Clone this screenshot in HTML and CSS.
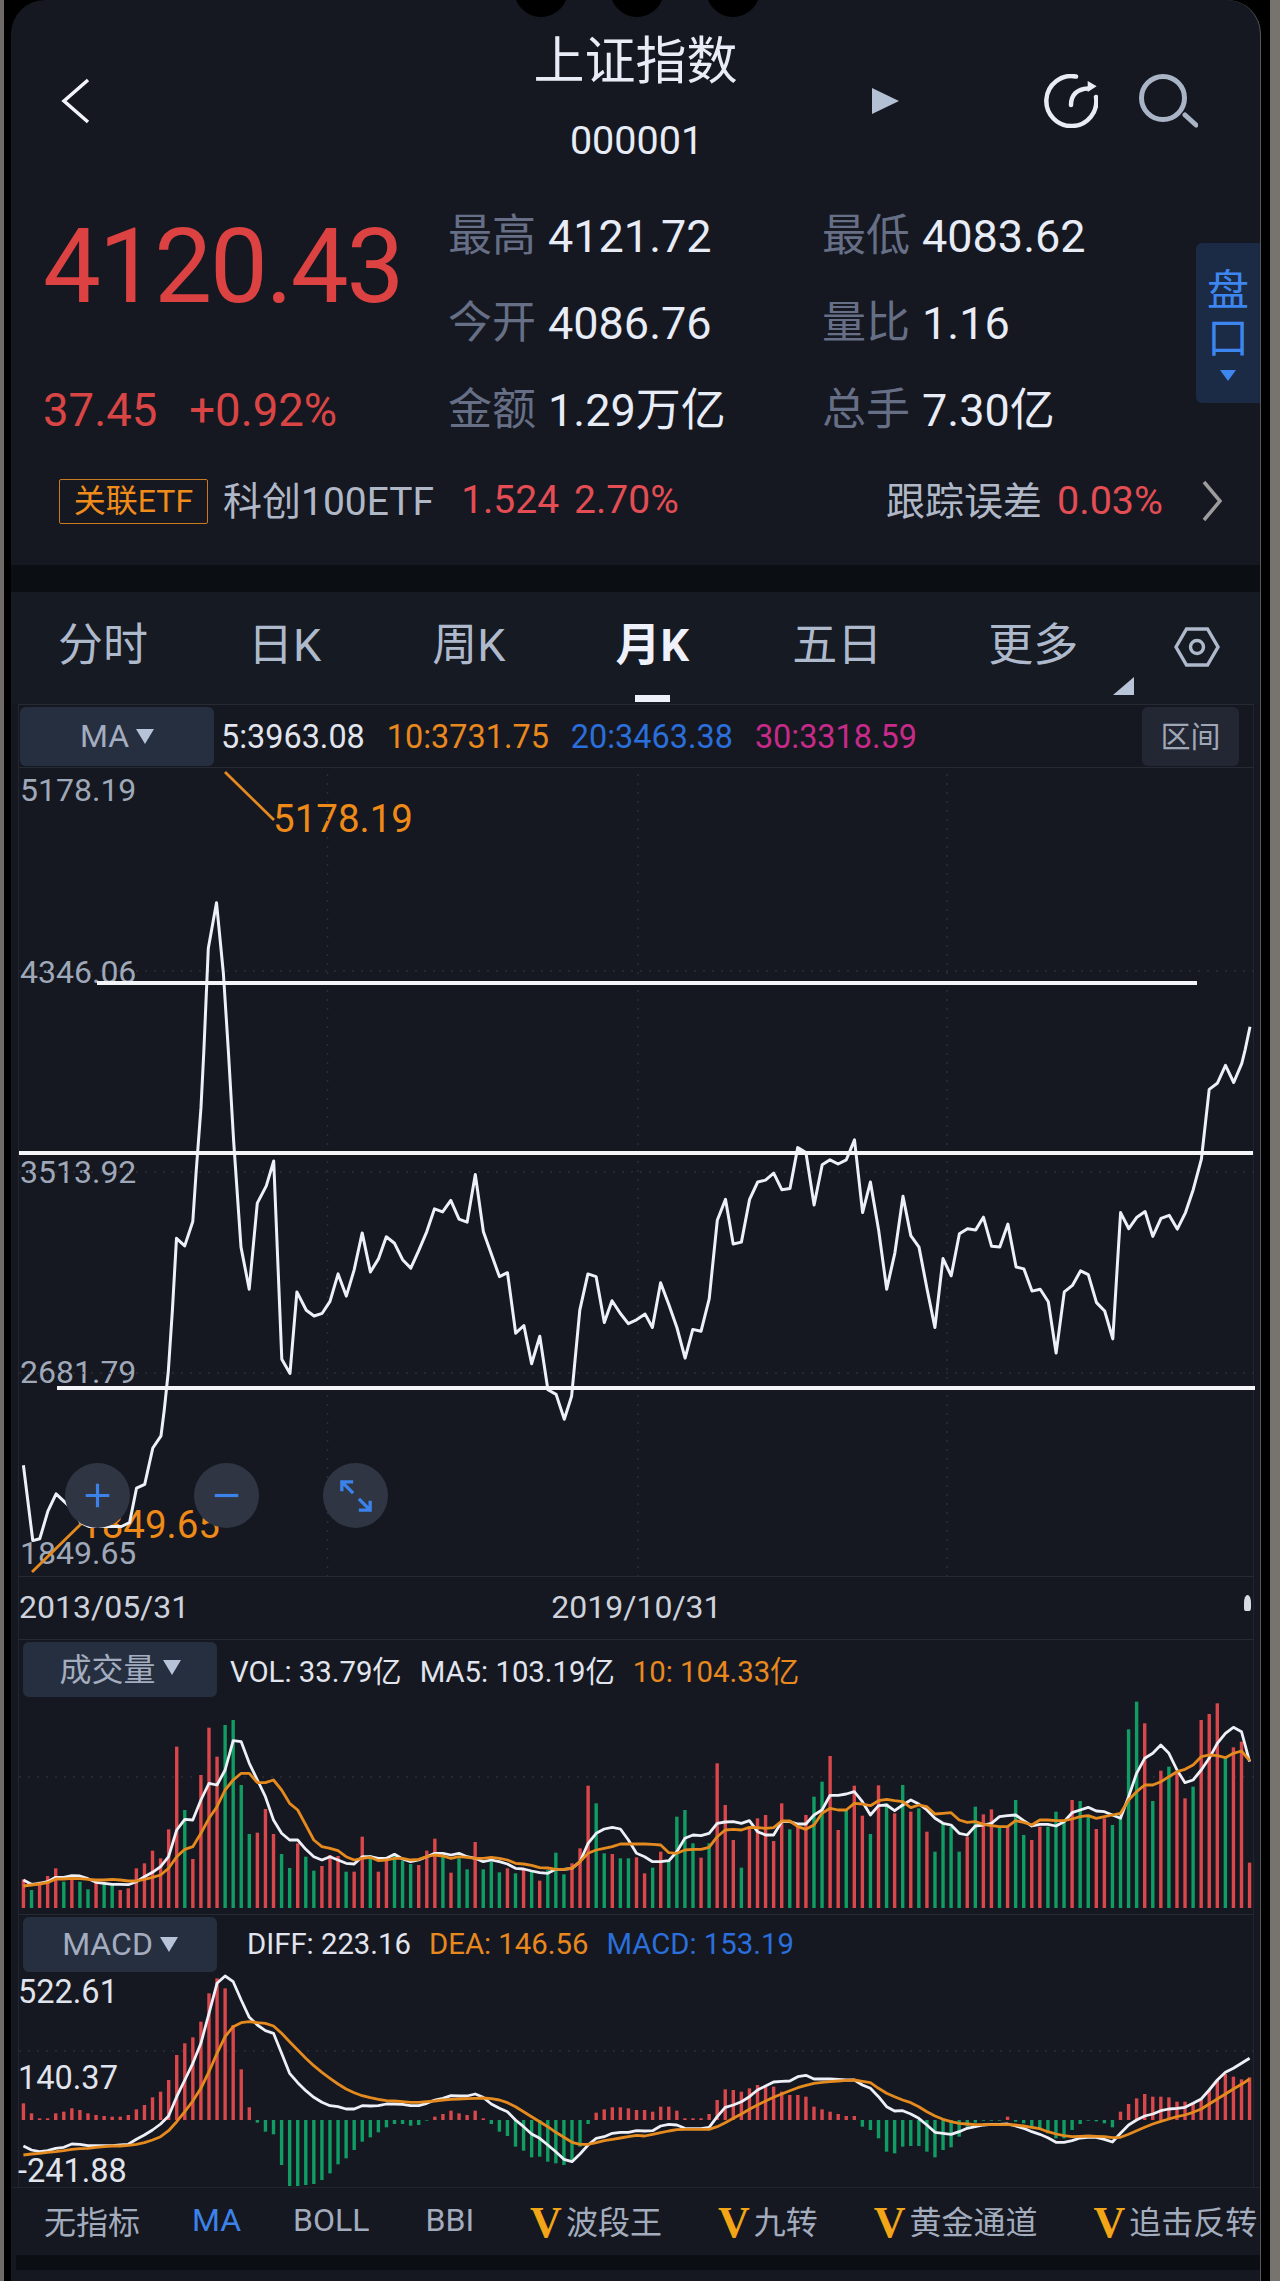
FILE: index.html
```html
<!DOCTYPE html>
<html lang="zh-CN">
<head>
    <meta charset="UTF-8">
    <meta name="viewport" content="width=device-width, initial-scale=1.0">
    <title>上证指数</title>
    <link rel="stylesheet" href="styles.css">
</head>
<body>
<div class="phone">
    <div class="screen">
        <!-- Camera cut-outs along the top edge -->
        <div class="cams"><span></span><span></span><span></span></div>

        <header class="top">
            <svg class="back" viewBox="0 0 30 48"><polyline points="27,3 3,24 27,45"/></svg>
            <div class="title-box">
                <h1>上证指数</h1>
                <div class="code">000001</div>
            </div>
            <div class="tools">
                <span class="play"></span>
                <svg class="refresh" viewBox="0 0 54 54">
                    <path d="M32 2.5 A25 25 0 1 0 52 23"/>
                    <path d="M27 31 C27 21 33 15 44 14.5"/>
                    <polygon points="43.7,7 52.7,12.3 43.7,18"/>
                </svg>
                <svg class="search" viewBox="0 0 60 56">
                    <circle cx="25" cy="25" r="21.5"/>
                    <path d="M47 42 L58 52"/>
                </svg>
            </div>
        </header>

        <section class="quote">
            <div class="price">4120.43</div>
            <div class="change"><span>37.45</span><span>+0.92%</span></div>
            <div class="stat"><span class="label">最高</span><span>4121.72</span></div>
            <div class="stat"><span class="label">最低</span><span>4083.62</span></div>
            <div class="stat"><span class="label">今开</span><span>4086.76</span></div>
            <div class="stat"><span class="label">量比</span><span>1.16</span></div>
            <div class="stat"><span class="label">金额</span><span>1.29万亿</span></div>
            <div class="stat"><span class="label">总手</span><span>7.30亿</span></div>
        </section>

        <div class="pankou">
            <span>盘</span><span>口</span>
            <i class="pankou-arrow"></i>
        </div>

        <div class="etf">
            <span class="etf-tag">关联ETF</span>
            <span class="etf-name">科创100ETF</span>
            <span class="etf-num etf-price">1.524</span>
            <span class="etf-num">2.70%</span>
            <span class="etf-track">跟踪误差</span>
            <span class="etf-num">0.03%</span>
            <svg class="etf-more" viewBox="0 0 22 42"><polyline points="3,2 19,21 3,40"/></svg>
        </div>

        <div class="band"></div>

        <nav class="tabs">
            <a>分时</a>
            <a>日K</a>
            <a>周K</a>
            <a class="active">月K</a>
            <a>五日</a>
            <a>更多</a>
            <svg class="gear" viewBox="0 0 46 40">
                <polygon points="2,20 12.5,2 33.5,2 44,20 33.5,38 12.5,38"/>
                <circle cx="23" cy="20" r="6.5"/>
            </svg>
            <span class="corner"></span>
        </nav>

        <div class="chart-box">
            <div class="bar ma-bar">
                <div class="picker">MA<i></i></div>
                <span class="ma-val white">5:3963.08</span>
                <span class="ma-val orange">10:3731.75</span>
                <span class="ma-val blue">20:3463.38</span>
                <span class="ma-val pink">30:3318.59</span>
                <div class="range">区间</div>
            </div>

            <div class="main-chart">
                <span class="axis a1">5178.19</span>
                <span class="axis a2">4346.06</span>
                <span class="axis a3">3513.92</span>
                <span class="axis a4">2681.79</span>
                <span class="axis a5">1849.65</span>
                <span class="callout c-high">5178.19</span>
                <span class="callout c-low">1849.65</span>
                <svg id="main-svg" class="plot" width="1236" height="808"></svg>
                <div class="zoom-btns">
                    <button class="round"><svg viewBox="0 0 32 32"><path d="M16 3 V29 M3 16 H29"/></svg></button>
                    <button class="round"><svg viewBox="0 0 32 32"><path d="M3 16 H29"/></svg></button>
                    <button class="round round-wide"><svg viewBox="0 0 36 36"><path d="M3 3 L15 15 M3 13 V3 H15 M33 33 L21 21 M33 23 V33 H21"/></svg></button>
                </div>
            </div>

            <div class="dates">
                <span>2013/05/31</span>
                <span class="date-mid">2019/10/31</span>
                <i class="blot"></i>
            </div>

            <div class="bar sub-bar vol-bar">
                <div class="picker picker-sub">成交量<i></i></div>
                <span class="sub-val first white">VOL: 33.79亿</span>
                <span class="sub-val white">MA5: 103.19亿</span>
                <span class="sub-val orange">10: 104.33亿</span>
            </div>
            <div class="sub-chart"><svg id="vol-svg" class="plot" width="1236" height="214"></svg></div>

            <div class="bar sub-bar macd-bar">
                <div class="picker picker-sub">MACD<i></i></div>
                <span class="sub-val first-macd white">DIFF: 223.16</span>
                <span class="sub-val orange">DEA: 146.56</span>
                <span class="sub-val blue">MACD: 153.19</span>
            </div>
            <div class="sub-chart">
                <svg id="macd-svg" class="plot" width="1236" height="214"></svg>
                <span class="macd-axis m1">522.61</span>
                <span class="macd-axis m2">140.37</span>
                <span class="macd-axis m3">-241.88</span>
            </div>
        </div>

        <div class="indicators">
            <span>无指标</span>
            <span class="blue-on">MA</span>
            <span class="boll">BOLL</span>
            <span>BBI</span>
            <span><b class="vip">V</b>波段王</span>
            <span><b class="vip">V</b>九转</span>
            <span><b class="vip">V</b>黄金通道</span>
            <span><b class="vip">V</b>追击反转</span>
        </div>

        <div class="band band-bottom"></div>
    </div>
</div>
<script src="chart.js"></script>
</body>
</html>
```

FILE: styles.css
```css
* {
    box-sizing: border-box;
}

body {
    margin: 0;
    background-color: #000;
    font-family: Roboto, "Noto Sans CJK SC", sans-serif;
    color: #e8ecf6;
}

.phone {
    width: 1280px;
    height: 2281px;
    overflow: hidden;
    padding: 0 9px 0 7px;
    background-color: #000;
    border-left: 4px solid #6f6a68;
    border-right: 10px solid #77736f;
}

.screen {
    position: relative;
    width: 1250px;
    height: 2281px;
    background-color: #151821;
    border-right: 1px solid #55565c;
    border-radius: 34px 34px 0 0;
}

.cams {
    position: absolute;
    top: -37px;
    left: 503px;
    display: flex;
    gap: 42px;
}

.cams span {
    width: 54px;
    height: 54px;
    border-radius: 50%;
    background-color: #000;
}

/* Top bar */
.top {
    display: grid;
    grid-template-columns: 1fr auto 1fr;
    height: 165px;
}

.back {
    width: 30px;
    height: 48px;
    margin: 77px 0 0 50px;
}

.back polyline, .etf-more polyline {
    fill: none;
    stroke: #f2f4fa;
    stroke-width: 3.5;
}

.title-box {
    text-align: center;
}

h1 {
    margin: 32px 0 0;
    font-size: 51px;
    font-weight: 400;
    line-height: 60px;
}

.code {
    margin-top: 24px;
    padding-left: 2px;
    font-size: 39.5px;
    line-height: 50px;
}

.tools {
    display: flex;
    align-items: center;
    height: 60px;
    margin-top: 71px;
}

.play {
    width: 0;
    height: 0;
    margin-left: 134px;
    border-left: 27px solid #b4c0d4;
    border-top: 13px solid transparent;
    border-bottom: 13px solid transparent;
}

.refresh {
    width: 54px;
    height: 54px;
    margin-left: 145px;
    fill: none;
    stroke: #e8ecf6;
    stroke-width: 4.5;
    stroke-linecap: round;
}

.refresh polygon {
    fill: #e8ecf6;
    stroke: none;
}

.search {
    width: 60px;
    height: 56px;
    margin-left: 40px;
    fill: none;
    stroke: #a9b4c6;
    stroke-width: 5;
    stroke-linecap: round;
}

/* Quote block */
.quote {
    display: grid;
    grid-template-columns: 438px 374px 1fr;
    grid-auto-rows: 87px;
    padding-top: 28px;
    font-size: 45px;
}

.price {
    grid-column: 1;
    grid-row: 1 / 3;
    height: 148px;
    padding-left: 32px;
    font-size: 103px;
    line-height: 148px;
    letter-spacing: -2.2px;
    color: #dc4242;
}

.change {
    grid-column: 1;
    grid-row: 3;
    display: flex;
    gap: 32px;
    padding-left: 32px;
    font-size: 45.5px;
    line-height: 87px;
    color: #d94545;
}

.stat {
    display: flex;
    gap: 12px;
    margin-left: -1px;
    line-height: 87px;
}

.label {
    font-size: 44px;
    color: #666f86;
}

.pankou {
    position: absolute;
    top: 243px;
    right: 0;
    width: 64px;
    height: 160px;
    padding-top: 24px;
    display: flex;
    flex-direction: column;
    align-items: center;
    background-color: #1b2a45;
    border-radius: 6px 0 0 6px;
    font-size: 42px;
    line-height: 48px;
    color: #3d86ef;
}

.pankou-arrow {
    width: 0;
    height: 0;
    margin-top: 7px;
    border-top: 11px solid #3d86ef;
    border-left: 8px solid transparent;
    border-right: 8px solid transparent;
}

/* ETF row */
.etf {
    display: flex;
    align-items: center;
    height: 46px;
    margin-top: 24px;
    padding: 0 37px 0 48px;
    font-size: 39px;
    color: #b0b8c8;
}

.etf-tag {
    display: flex;
    align-items: center;
    justify-content: center;
    width: 149px;
    height: 45px;
    padding-bottom: 6px;
    border: 1px solid #c87a1c;
    border-radius: 2px;
    font-size: 32px;
    color: #f08c1a;
}

.etf-name {
    margin: -6px 0 0 15px;
}

.etf-num {
    margin: -2px 0 0 15px;
    color: #e34d53;
}

.etf-price {
    margin-left: 27px;
}

.etf-track {
    margin: -6px 0 0 auto;
}

.etf-track + .etf-num {
    margin-right: 1px;
    font-size: 39.5px;
}

.etf-more {
    width: 22px;
    height: 42px;
    margin-left: 37px;
}

.etf-more polyline {
    stroke: #9c9c9c;
}

.band {
    height: 27px;
    margin-top: 41px;
    background-color: #0b0e13;
}

/* Period tabs */
.tabs {
    position: relative;
    display: flex;
    align-items: center;
    height: 112px;
    padding: 0 0 13px 47px;
    background-color: #161a22;
    font-size: 45px;
    color: #aeb9cc;
}

.tabs a:nth-child(2) { margin-left: 100px; }
.tabs a:nth-child(3) { margin-left: 111px; }
.tabs a:nth-child(4) { margin-left: 110px; }
.tabs a:nth-child(5) { margin-left: 103px; }
.tabs a:nth-child(6) { margin-left: 106px; }

.tabs .active {
    position: relative;
    font-weight: 700;
    color: #eef1fa;
}

.tabs .active::after {
    content: "";
    position: absolute;
    left: 19px;
    bottom: -28px;
    width: 35px;
    height: 7px;
    background-color: #eef1fa;
}

.gear {
    position: absolute;
    top: 35px;
    left: 1163px;
    width: 46px;
    height: 40px;
    fill: none;
    stroke: #aeb9cc;
    stroke-width: 3.4;
}

.corner {
    position: absolute;
    top: 85px;
    left: 1102px;
    width: 0;
    height: 0;
    border-bottom: 18px solid #b8c4d8;
    border-left: 21px solid transparent;
}

/* Chart box */
.chart-box {
    margin: 0 6px 0 7px;
    border-left: 1px solid #22252e;
    border-right: 1px solid #22252e;
}

.bar {
    display: flex;
    align-items: center;
    font-size: 32.4px;
}

.ma-bar {
    height: 64px;
    padding-left: 1px;
    border-top: 1px solid #262a33;
    border-bottom: 1px solid #262a33;
}

.picker {
    display: flex;
    align-items: center;
    justify-content: center;
    gap: 7px;
    width: 194px;
    height: 59px;
    background-color: #262f3f;
    border-radius: 6px;
    font-size: 32px;
    color: #a4adbf;
}

.picker i {
    width: 0;
    height: 0;
    border-top: 15px solid #b6c3d9;
    border-left: 9px solid transparent;
    border-right: 9px solid transparent;
}

.ma-val {
    position: relative;
    top: 1px;
    margin-right: 22px;
}

.ma-bar .white {
    margin-left: 7px;
}

.white { color: #e2e5ee; }
.orange { color: #e8881e; }
.blue { color: #2a6fdc; }
.pink { color: #c82a8a; }

.range {
    margin-left: auto;
    margin-right: 14px;
    display: flex;
    align-items: center;
    justify-content: center;
    width: 97px;
    height: 59px;
    padding-bottom: 4px;
    background-color: #232733;
    border-radius: 6px;
    font-size: 30px;
    color: #a0a8b8;
}

.main-chart {
    position: relative;
    height: 808px;
}

.plot {
    position: absolute;
    top: 0;
    left: 0;
    display: block;
}

.axis {
    position: absolute;
    left: 1px;
    font-size: 32px;
    line-height: 40px;
    color: #9fa8b8;
}

.a1 { top: 2px; }
.a2 { top: 184px; }
.a3 { top: 384px; }
.a4 { top: 584px; }
.a5 { top: 765px; }

.callout {
    position: absolute;
    font-size: 38.5px;
    line-height: 44px;
    color: #ef8a18;
}

.c-high { top: 29px; left: 254px; }
.c-low { top: 735px; left: 61px; }

.zoom-btns {
    position: absolute;
    top: 695px;
    left: 46px;
    display: flex;
    gap: 64px;
}

.round {
    display: flex;
    align-items: center;
    justify-content: center;
    width: 65px;
    height: 65px;
    padding: 0;
    border: none;
    border-radius: 50%;
    background-color: #2f3543;
}

.round svg {
    width: 29px;
    height: 29px;
    fill: none;
    stroke: #3b82ea;
    stroke-width: 3.5;
}

.round-wide svg {
    width: 34px;
    height: 34px;
}

.dates {
    position: relative;
    display: flex;
    align-items: center;
    height: 64px;
    padding-bottom: 2px;
    border-top: 1px solid #262a33;
    border-bottom: 1px solid #262a33;
    font-size: 32px;
    color: #cdd2dc;
}

.date-mid {
    margin-left: 362px;
}

.blot {
    position: absolute;
    top: 18px;
    right: 2px;
    width: 7px;
    height: 16px;
    background-color: #d8dbe2;
    border-radius: 60% 60% 30% 20%;
}

.sub-bar {
    height: 60px;
    padding-left: 4px;
    font-size: 29.3px;
}

.vol-bar > * {
    position: relative;
    top: -1px;
}

.picker-sub {
    height: 55px;
    padding-bottom: 4px;
}

.sub-val {
    margin-right: 18px;
}

.first {
    margin-left: 13px;
}

.macd-bar {
    height: 59px;
    border-top: 1px solid #262a33;
}

.macd-bar .picker-sub {
    padding-bottom: 0;
}

.first-macd {
    margin-left: 30px;
}

.sub-chart {
    position: relative;
    height: 214px;
}

.macd-axis {
    position: absolute;
    left: -1px;
    font-size: 32.5px;
    line-height: 40px;
    color: #e0e4ec;
}

.m1 { top: -1px; }
.m2 { top: 85px; }
.m3 { top: 178px; }

/* Indicator row */
.indicators {
    display: flex;
    align-items: center;
    gap: 56px;
    height: 68px;
    padding: 0 0 4px 33px;
    white-space: nowrap;
    border-top: 1px solid #22252e;
    font-size: 32px;
    color: #a3acbd;
}

.blue-on {
    margin-left: -4px;
    color: #3b82ea;
}

.boll {
    margin-left: -4px;
}

.vip {
    margin-right: 4px;
    font-family: "Liberation Serif", serif;
    font-size: 44px;
    line-height: 40px;
    vertical-align: -3px;
    color: #f2a516;
}

.band-bottom {
    height: 15px;
    margin: 0 0 0 5px;
}
```

FILE: chart.js
```js
// Chart data is kept in the scale the sketch was measured at: 2.45 units per pixel across
const X_SCALE = 2.45;
const CHART_LEFT = 18;
const FIRST_X = 55;
const LAST_X = 3059;
const RED = "#d9474a";
const GREEN = "#0f9d63";
const WHITE = "#eef0f8";
const ORANGE = "#e58a1e";
const NS = "http://www.w3.org/2000/svg";

function toX(x) {
    return x / X_SCALE - CHART_LEFT;
}

function draw(svg, name, attrs) {
    const el = document.createElementNS(NS, name);
    Object.keys(attrs).forEach(function (k) { el.setAttribute(k, attrs[k]); });
    svg.appendChild(el);
    return el;
}

function polyline(svg, pts, color, width) {
    draw(svg, "polyline", {
        points: pts.map(function (p) { return p[0].toFixed(1) + "," + p[1].toFixed(1); }).join(" "),
        fill: "none",
        stroke: color,
        "stroke-width": width,
        "stroke-linejoin": "round"
    });
}

function dotted(svg, x1, y1, x2, y2) {
    draw(svg, "line", { x1: x1, y1: y1, x2: x2, y2: y2, stroke: "#2b2e39", "stroke-width": 1.5, "stroke-dasharray": "2 7" });
}

function indexX(i, n) {
    return toX(FIRST_X + (LAST_X - FIRST_X) * i / (n - 1));
}

// ---- Main month line ----
const mainPts = [
    [55,1085],[78,1282],[95,1277],[115,1205],[135,1160],[155,1180],[175,1200],[195,1235],[215,1245],[235,1245],
    [255,1245],[275,1245],[295,1245],[315,1235],[332,1145],[352,1135],[372,1040],[392,1008],[400,940],[410,840],
    [420,680],[430,492],[450,512],[470,448],[478,320],[490,150],[497,0],[508,-266],[528,-385],[545,-200],
    [557,0],[570,240],[588,515],[608,625],[628,400],[650,355],[668,290],[688,808],[708,845],[725,632],
    [748,680],[767,695],[787,688],[806,657],[826,585],[846,643],[865,575],[885,478],[905,580],[925,545],
    [944,488],[964,505],[984,548],[1004,570],[1023,525],[1043,475],[1062,415],[1082,423],[1102,393],[1122,442],
    [1142,450],[1162,325],[1182,475],[1202,535],[1221,592],[1241,582],[1261,740],[1281,720],[1300,820],[1320,748],
    [1340,888],[1360,900],[1380,965],[1398,905],[1418,680],[1438,585],[1458,592],[1478,712],[1497,655],[1517,688],
    [1537,715],[1557,705],[1578,690],[1596,725],[1616,608],[1636,665],[1656,725],[1676,805],[1695,730],[1715,735],
    [1735,650],[1755,445],[1775,390],[1794,507],[1814,502],[1834,390],[1854,345],[1873,340],[1893,322],[1913,365],
    [1933,362],[1952,255],[1972,268],[1992,405],[2012,300],[2031,287],[2051,298],[2071,287],[2091,235],[2111,425],
    [2130,345],[2150,470],[2170,625],[2190,530],[2210,382],[2229,485],[2249,515],[2269,625],[2288,725],[2308,545],
    [2328,590],[2348,480],[2368,467],[2388,470],[2407,437],[2427,513],[2447,515],[2467,455],[2487,567],[2506,572],
    [2526,630],[2546,625],[2566,658],[2585,792],[2605,632],[2625,615],[2645,577],[2664,587],[2684,660],[2704,682],
    [2724,755],[2743,425],[2763,467],[2783,437],[2803,422],[2822,487],[2842,440],[2862,432],[2882,468],[2902,425],
    [2921,365],[2941,285],[2960,103],[2980,87],[3000,40],[3020,85],[3040,35],[3048,0],[3060,-61]
];

const mainSvg = document.getElementById("main-svg");
[326.5, 637, 946].forEach(function (x) { dotted(mainSvg, x - CHART_LEFT, 6, x - CHART_LEFT, 808); });
[203, 404, 605].forEach(function (y) { dotted(mainSvg, 0, y, 1236, y); });
polyline(mainSvg, mainPts.map(function (p) { return [toX(p[0]), 282 + p[1] / 2.613]; }), WHITE, 3);
// max and min markers
polyline(mainSvg, [[206, 4], [255, 52]], ORANGE, 2.8);
polyline(mainSvg, [[13, 804], [62, 756]], ORANGE, 2.8);
// hand-drawn support lines
polyline(mainSvg, [[78, 215], [1178, 215]], "#f4f5f8", 4);
polyline(mainSvg, [[-6, 385], [1234, 385]], "#f4f5f8", 4);
polyline(mainSvg, [[38, 620], [1236, 620]], "#f4f5f8", 4);

// ---- Volume ----
const volTops = [
    718,750,725,708,685,725,720,725,748,725,730,735,750,745,685,670,632,655,568,320,
    510,657,405,263,350,255,240,435,582,578,507,582,642,684,610,650,692,678,645,648,
    695,695,590,645,695,660,640,662,672,675,632,596,650,698,655,688,606,688,665,697,
    685,700,690,695,722,690,638,703,670,625,437,490,640,642,655,655,652,
    700,683,635,660,530,510,610,653,610,370,495,600,683,560,535,525,603,490,568,560,
    525,470,425,348,570,510,437,527,582,436,490,520,435,515,505,575,635,550,560,635,
    590,500,523,508,560,560,480,585,600,560,560,515,545,480,483,530,567,535,555,520,
    268,185,250,483,392,380,400,475,440,240,222,190,350,322,305,668
];
const volGreen = new Set([
    1,5,7,8,10,11,20,25,26,27,28,32,33,35,36,40,43,46,47,48,52,54,55,57,58,59,61,63,65,66,67,71,72,74,75,
    78,80,81,82,83,85,89,95,98,99,102,105,107,109,111,113,114,115,116,118,121,123,124,127,128,129,131,132,
    135,136,137,138,140,142,145,149
]);
const volWhite = [
    720,733,730,725,712,712,707,708,716,727,730,733,733,734,725,710,697,680,650,570,
    538,540,480,430,435,390,302,305,370,420,470,540,580,600,600,628,650,660,650,660,
    670,672,650,650,655,655,643,657,665,660,650,640,640,645,640,650,655,665,660,665,
    672,685,687,693,698,700,688,688,685,665,610,580,567,562,567,600,640,
    650,665,665,662,635,595,585,587,580,550,546,545,550,542,575,585,585,545,545,552,
    552,525,510,466,466,462,455,485,525,497,495,512,495,480,492,510,535,550,555,580,
    585,558,555,550,530,527,525,542,558,553,553,558,545,518,510,502,513,515,525,535,
    470,400,355,340,315,340,390,428,420,390,355,310,280,262,275,365
];
const volOrange = [
    738,735,732,728,717,717,715,716,718,720,720,718,720,723,723,718,712,705,685,650,
    628,620,580,535,500,450,420,400,400,428,428,420,450,490,510,555,600,620,625,632,
    650,660,655,652,662,660,655,655,660,658,650,645,648,655,650,652,655,655,652,655,
    660,670,672,676,683,684,688,688,685,665,640,630,625,620,612,612,612,
    612,613,615,638,640,630,628,628,622,590,570,568,570,562,563,565,563,543,543,560,
    568,555,520,505,510,510,490,492,497,482,478,482,485,503,495,500,522,520,518,540,
    547,545,553,557,560,560,542,547,555,540,540,542,542,537,530,527,535,530,525,520,
    480,455,435,435,425,410,395,388,375,350,345,347,353,340,333,362
];

const volSvg = document.getElementById("vol-svg");
dotted(volSvg, 0, 77, 1236, 77);
volTops.forEach(function (top, i) {
    const x = indexX(i, volTops.length);
    draw(volSvg, "rect", {
        x: x - 1.7, y: top / 3 - 60, width: 3.4, height: 208 - (top / 3 - 60),
        fill: volGreen.has(i) ? GREEN : RED
    });
});
polyline(volSvg, volWhite.map(function (v, i) { return [indexX(i, volWhite.length), v / 3 - 60]; }), WHITE, 2.8);
polyline(volSvg, volOrange.map(function (v, i) { return [indexX(i, volOrange.length), v / 3 - 60]; }), ORANGE, 2.8);

// ---- MACD ----
const macdTops = [
    610,640,655,655,640,635,625,630,640,645,648,650,650,645,628,615,592,575,540,465,
    430,412,365,280,235,265,375,508,622,668,695,703,795,858,858,855,852,840,820,793,
    775,750,725,712,697,682,672,672,677,675,662,650,642,632,640,645,632,655,672,695,
    708,740,752,772,770,785,790,795,785,740,672,638,628,622,622,625,630,
    630,635,620,620,632,655,655,655,642,600,568,570,575,565,555,560,560,575,585,585,
    590,620,628,635,642,648,648,680,690,715,755,760,740,738,738,755,772,750,742,710,
    680,668,662,662,662,650,665,670,680,690,700,715,715,690,672,662,664,670,682,635,
    612,595,582,590,590,592,605,605,610,600,570,540,522,530,538,532
];
const macdWhite = [
    738,750,755,752,745,742,732,733,737,737,737,737,735,733,718,705,690,672,648,590,
    540,490,430,340,250,228,245,300,352,375,392,400,460,520,548,572,592,607,617,620,
    627,627,617,618,617,612,612,613,617,617,610,600,595,587,588,588,582,592,612,625,
    635,660,680,702,715,735,755,778,785,762,735,715,710,700,697,697,692,
    693,692,678,673,675,685,686,686,682,650,622,615,605,590,570,558,546,544,543,530,
    526,537,537,537,538,540,540,555,565,590,620,633,632,642,655,675,697,700,703,695,
    685,680,675,673,673,672,678,685,695,703,713,727,727,722,714,712,712,718,726,700,
    675,660,648,642,632,627,625,622,610,597,570,540,517,505,490,475
];
const macdOrange = [
    765,762,760,757,755,752,748,746,745,742,740,738,738,736,733,728,720,710,692,665,
    635,603,565,515,460,410,380,368,365,368,370,378,400,425,450,475,497,517,535,552,
    567,578,587,593,598,602,603,605,607,607,605,603,600,598,597,596,595,594,596,600,
    608,620,635,650,665,680,697,712,727,733,733,728,722,718,714,710,706,
    708,703,698,693,689,688,688,688,688,680,668,655,642,628,615,603,592,582,572,563,
    556,550,547,545,543,541,540,544,548,565,580,590,600,608,620,635,648,658,665,670,
    672,674,674,674,674,674,675,678,682,686,695,702,707,710,709,708,709,710,713,712,
    703,692,682,672,664,657,650,645,637,627,612,597,582,567,553,537
];

const macdSvg = document.getElementById("macd-svg");
dotted(macdSvg, 0, 78, 1236, 78);
macdTops.forEach(function (top, i) {
    const x = indexX(i, macdTops.length);
    const y = top / 3 - 73;
    const zero = 147;
    draw(macdSvg, "rect", {
        x: x - 1.7, y: Math.min(y, zero), width: 3.4, height: Math.abs(y - zero),
        fill: top < 660 ? RED : GREEN
    });
});
polyline(macdSvg, macdWhite.map(function (v, i) { return [indexX(i, macdWhite.length), v / 3 - 73]; }), WHITE, 2.8);
polyline(macdSvg, macdOrange.map(function (v, i) { return [indexX(i, macdOrange.length), v / 3 - 73]; }), ORANGE, 2.8);
```
